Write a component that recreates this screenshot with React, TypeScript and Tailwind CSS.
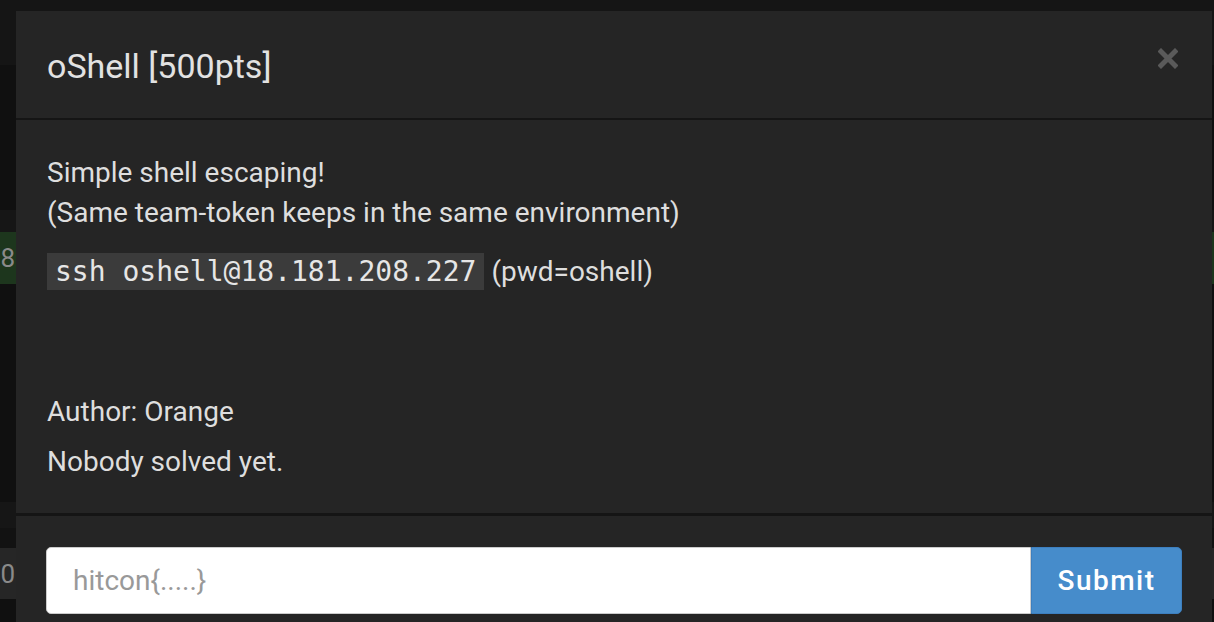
import React from "react";

const ROWS = [
  { h: "h-[65px]", bg: "bg-[#151515]", text: "" },
  { h: "h-[145px]", bg: "bg-[#101010]", text: "" },
  { h: "h-[22px]", bg: "bg-[#161616]", text: "" },
  { h: "h-[52px]", bg: "bg-[#1d361d]", text: "8" },
  { h: "h-[218px]", bg: "bg-[#101010]", text: "" },
  { h: "h-[26px]", bg: "bg-[#161616]", text: "" },
  { h: "h-[20px]", bg: "bg-[#121212]", text: "" },
  { h: "h-[51px]", bg: "bg-[#262626]", text: "0" },
  { h: "h-[23px]", bg: "bg-[#101010]", text: "" },
];

function CloseIcon() {
  return (
    <svg width="20" height="21" viewBox="0 0 20 21" className="text-[#5a5a5a] mb-[12px]">
      <path d="M3 3.5 L17 17.5 M17 3.5 L3 17.5" stroke="currentColor" strokeWidth="5" strokeLinecap="square" />
    </svg>
  );
}

export default function App() {
  return (
    <div className="relative w-[1214px] h-[622px] overflow-hidden bg-[#111111] font-['Roboto',sans-serif]">
      {/* page behind the dialog */}
      <div className="flex flex-col w-full">
        {ROWS.map((r, i) => (
          <div key={i} className={`${r.h} ${r.bg} flex items-center`}>
            <div className="w-[16px] flex justify-end pr-[1px]">
              <span className="text-[26px] text-[#8a8a8a] leading-none">{r.text}</span>
            </div>
          </div>
        ))}
      </div>

      {/* dialog */}
      <div className="absolute left-[16px] top-[11px] w-[1196px] bg-[#252525] text-[#dedede]">
        <div className="h-[109px] flex items-center justify-between pl-[31px] pr-[34px] border-b-2 border-[#151515]">
          <h4 className="text-[34px] leading-[40px] text-[#e2e2e2] pt-[2px]">oShell [500pts]</h4>
          <CloseIcon />
        </div>

        <div className="px-[31px] pt-[33px] pb-[31px] text-[28px] leading-[40px]">
          <p>
            Simple shell escaping!
            <br />
            (Same team-token keeps in the same environment)
          </p>
          <p className="mt-[19px]">
            <code className="bg-[#3b3b3b] px-[8px] py-[2px] text-[28px] text-[#e6e6e6] font-['DejaVu_Sans_Mono',monospace]">
              ssh oshell@18.181.208.227
            </code>{" "}
            (pwd=oshell)
          </p>
          <div className="h-[100px]" />
          <p>Author: Orange</p>
          <p className="mt-[10px]">Nobody solved yet.</p>
        </div>

        <div className="border-t-[3px] border-[#151515] px-[30px] pt-[31px] pb-[30px]">
          <div className="flex h-[67px]">
            <input
              placeholder="hitcon{.....}"
              className="flex-1 bg-white rounded-l-[5px] border border-[#cccccc] px-[26px] text-[28px] text-[#333] placeholder:text-[#999999] outline-none"
            />
            <button className="w-[151px] bg-[#468ccb] border border-[#3d7fbf] rounded-r-[5px] text-white text-[28px] font-medium tracking-[1.5px]">
              Submit
            </button>
          </div>
        </div>
      </div>
    </div>
  );
}
